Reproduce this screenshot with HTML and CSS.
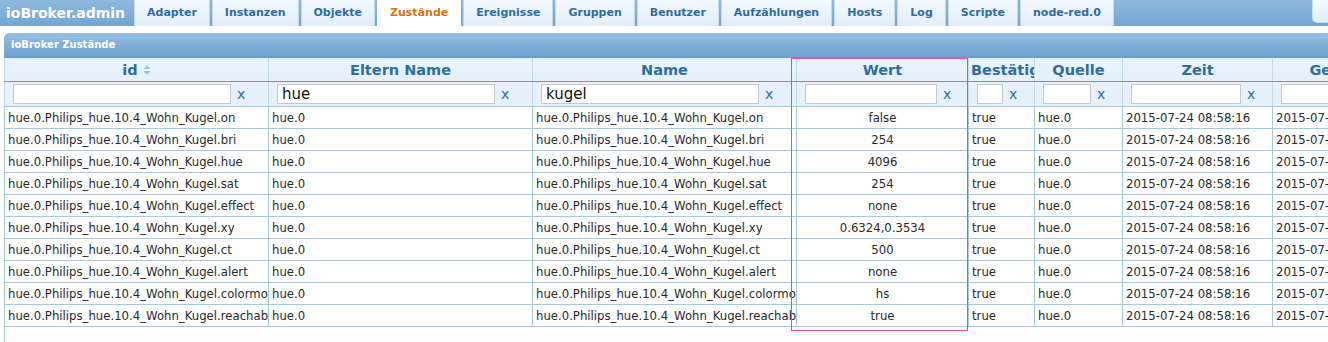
FILE: index.html
```html
<!DOCTYPE html>
<html lang="de">
<head>
    <meta charset="UTF-8">
    <title>ioBroker.admin</title>
    <link rel="stylesheet" href="styles.css">
</head>
<body>
    <div class="topbar">
        <div class="brand">ioBroker.admin</div>
        <ul class="tabs">
            <li>Adapter</li>
            <li>Instanzen</li>
            <li>Objekte</li>
            <li class="active">Zustände</li>
            <li>Ereignisse</li>
            <li>Gruppen</li>
            <li>Benutzer</li>
            <li>Aufzählungen</li>
            <li>Hosts</li>
            <li>Log</li>
            <li>Scripte</li>
            <li>node-red.0</li>
        </ul>
        <div class="corner-btn"></div>
    </div>

    <div class="panel">
        <div class="panel-title">ioBroker Zustände</div>
        <table class="grid">
            <colgroup>
                <col style="width: 264px">
                <col style="width: 264px">
                <col style="width: 264px">
                <col style="width: 172px">
                <col style="width: 66px">
                <col style="width: 88px">
                <col style="width: 150px">
                <col style="width: 150px">
            </colgroup>
            <thead>
                <tr class="head-row">
                    <th>id <svg class="sort" width="8" height="12" viewBox="0 0 8 12"><path d="M4 1 L7.5 5 H0.5 Z M4 11 L7.5 7 H0.5 Z" fill="#9fc1e1"/></svg></th>
                    <th>Eltern Name</th>
                    <th>Name</th>
                    <th>Wert</th>
                    <th>Bestätigt</th>
                    <th>Quelle</th>
                    <th>Zeit</th>
                    <th>Geändert</th>
                </tr>
                <tr class="filter-row">
                    <td><div class="filter wide"><input type="text"><span class="clear">x</span></div></td>
                    <td><div class="filter wide"><input type="text" value="hue"><span class="clear">x</span></div></td>
                    <td><div class="filter wide"><input type="text" value="kugel"><span class="clear">x</span></div></td>
                    <td><div class="filter"><input type="text"><span class="clear">x</span></div></td>
                    <td><div class="filter"><input type="text"><span class="clear">x</span></div></td>
                    <td><div class="filter"><input type="text"><span class="clear">x</span></div></td>
                    <td><div class="filter"><input type="text"><span class="clear">x</span></div></td>
                    <td><div class="filter"><input type="text"><span class="clear">x</span></div></td>
                </tr>
            </thead>
            <tbody id="rows"></tbody>
        </table>
        <div class="grid-rest"></div>
    </div>

    <div class="marker"></div>

    <script>
        const states = [
            ["on", "false"],
            ["bri", "254"],
            ["hue", "4096"],
            ["sat", "254"],
            ["effect", "none"],
            ["xy", "0.6324,0.3534"],
            ["ct", "500"],
            ["alert", "none"],
            ["colormode", "hs"],
            ["reachable", "true"]
        ];
        const stamp = "2015-07-24 08:58:16";
        const body = document.getElementById("rows");

        states.forEach(function (s) {
            const id = "hue.0.Philips_hue.10.4_Wohn_Kugel." + s[0];
            const tr = document.createElement("tr");
            const cells = [id, "hue.0", id, s[1], "true", "hue.0", stamp, stamp];
            cells.forEach(function (text, i) {
                const td = document.createElement("td");
                td.textContent = text;
                if (i === 3) td.classList.add("center");
                tr.appendChild(td);
            });
            body.appendChild(tr);
        });
    </script>
</body>
</html>
```

FILE: styles.css
```css
html, body {
    margin: 0;
    padding: 0;
    overflow: hidden;
}
body {
    font-family: "DejaVu Sans", Verdana, sans-serif;
    background-color: #fdfdfd;
    width: 1328px;
    height: 342px;
    position: relative;
}
.topbar {
    display: flex;
    align-items: stretch;
    height: 26px;
    background: linear-gradient(#8fb9de, #72a5d3);
}
.brand {
    color: white;
    font-weight: bold;
    font-size: 14px;
    line-height: 26px;
    padding-left: 6px;
    width: 128px;
}
.tabs {
    display: flex;
    gap: 2px;
    list-style: none;
    margin: 0;
    padding: 0;
}
.tabs li {
    padding: 0 12px;
    font-size: 11px;
    font-weight: bold;
    line-height: 25px;
    color: #2e6e9e;
    background: linear-gradient(#f3f8fd, #e2eefa);
    border: 1px solid #c5dbec;
    border-top: none;
    border-bottom: none;
}
.tabs li.active {
    background: white;
    color: #e17009;
    border-color: white;
    line-height: 26px;
}
.corner-btn {
    margin-left: auto;
    margin-right: -20px;
    width: 34px;
    height: 22px;
    background: linear-gradient(#f3f8fd, #e2eefa);
    border: 1px solid #c5dbec;
    border-top: none;
    border-radius: 0 0 0 5px;
}
.panel {
    background-color: white;
    padding-top: 7px;
    padding-left: 4px;
    width: 1500px;
}
.panel-title {
    height: 24px;
    line-height: 24px;
    padding-left: 7px;
    color: white;
    font-weight: bold;
    font-size: 10px;
    border-radius: 5px 0 0 0;
    background: linear-gradient(#97bfe1, #6d9fcf);
    border-bottom: 1px solid #6a9bca;
}
.grid {
    border-collapse: collapse;
    table-layout: fixed;
    width: 1418px;
    background-color: white;
}
.grid th, .grid td {
    border: 1px solid #a6c9e2;
    overflow: hidden;
    white-space: nowrap;
}
.head-row th {
    height: 23px;
    padding: 0 2px;
    font-size: 14.5px;
    font-weight: bold;
    color: #2e6e9e;
    background: linear-gradient(#eaf4fd, #e4effa);
    border-color: #c5dbec;
    border-bottom: 1px solid #8e8e8e;
    border-top: none;
}
.sort {
    vertical-align: -1px;
}
.filter-row td {
    height: 24px;
    padding: 0;
    background: #e7f1fb;
    border-color: #c5dbec;
    border-bottom-color: #a6c9e2;
}
.filter {
    display: flex;
    align-items: center;
    padding: 0 16px 0 8px;
}
.filter.wide {
    padding-right: 22px;
}
.filter input {
    flex: 1;
    min-width: 0;
    height: 20px;
    box-sizing: border-box;
    border: 1px solid #c8c8c8;
    padding: 0 4px;
    font-family: "DejaVu Sans", sans-serif;
    font-size: 15px;
    color: #111;
    background: white;
}
.clear {
    margin-left: 6px;
    width: 9px;
    color: #2e6e9e;
    font-size: 14px;
    line-height: 20px;
}
tbody td {
    height: 21px;
    padding: 0 3px;
    font-size: 11.7px;
    color: #2a2a2a;
}
tbody td.center {
    text-align: center;
}
.grid-rest {
    height: 40px;
    border-left: 1px solid #a6c9e2;
    background: #fdfdfd;
}
.marker {
    position: absolute;
    left: 791px;
    top: 58px;
    width: 175px;
    height: 271px;
    border: 1.5px solid #e2508a;
}
```
